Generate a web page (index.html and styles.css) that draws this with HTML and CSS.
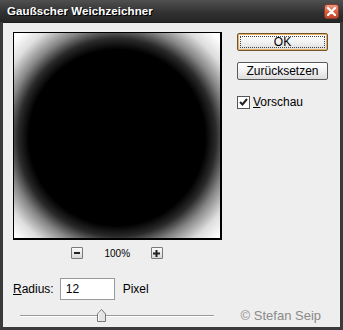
FILE: index.html
```html
<!DOCTYPE html>
<html>
<head>
<meta charset="utf-8">
<link rel="stylesheet" href="styles.css">
</head>
<body>
<div class="window">
  <div class="titlebar">
    <span class="title">Gaußscher Weichzeichner</span>
    <span class="close"><svg width="9" height="9" viewBox="0 0 9 9"><path d="M1 1L8 8M8 1L1 8" stroke="#fff" stroke-width="2.2" stroke-linecap="round"/></svg></span>
  </div>
  <div class="content">
    <div class="top">
      <div class="leftcol">
        <div class="preview"></div>
        <div class="zoomrow">
          <span class="zbtn"><svg width="6" height="2" viewBox="0 0 6 2"><rect width="6" height="2" fill="#222"/></svg></span>
          <span class="zoomval">100%</span>
          <span class="zbtn"><svg width="7" height="7" viewBox="0 0 7 7"><path d="M0 2.5h7v2H0zM2.5 0h2v7h-2z" fill="#222"/></svg></span>
        </div>
      </div>
      <div class="rightcol">
        <button class="btn ok"><span class="focus">OK</span></button>
        <button class="btn">Zurücksetzen</button>
        <label class="check">
          <span class="box"><svg width="9" height="8" viewBox="0 0 9 8"><path d="M1 4l2.5 2.5L8 1" fill="none" stroke="#222" stroke-width="2"/></svg></span>
          <span><u>V</u>orschau</span>
        </label>
      </div>
    </div>
    <div class="radiusrow">
      <span class="lbl"><u>R</u>adius:</span>
      <span class="input">12</span>
      <span class="lbl">Pixel</span>
    </div>
    <div class="sliderrow">
      <div class="slider">
        <div class="track"></div>
        <div class="thumb"><svg width="9" height="13" viewBox="0 0 9 13"><path d="M0.5 12.5V5L4.5 0.5L8.5 5V12.5Z" fill="#e4e4e4" stroke="#777"/><path d="M1.5 11.5V5.4L4.5 1.9" fill="none" stroke="#fff"/></svg></div>
      </div>
      <span class="copy">© Stefan Seip</span>
    </div>
  </div>
</div>
</body>
</html>
```
FILE: styles.css
```css
html, body {
  margin: 0;
  padding: 0;
  background: #2a2a2a;
}
.window {
  width: 343px;
  height: 330px;
  box-sizing: border-box;
  display: flex;
  flex-direction: column;
  background: #3a3a3a;
  padding: 0 3px 3px 3px;
  font-family: "Liberation Sans", Arial, sans-serif;
  font-size: 12px;
  color: #000;
}
.titlebar {
  height: 22px;
  display: flex;
  align-items: center;
  justify-content: space-between;
  background: linear-gradient(#505050, #303030 60%, #262626);
  margin: 0 -3px;
  padding-left: 7px;
  padding-right: 4px;
}
.title {
  color: #fff;
  font-weight: bold;
  font-size: 11.5px;
  letter-spacing: 0.1px;
  text-shadow: 1px 1px 0 #000;
}
.close {
  width: 15px;
  height: 15px;
  box-sizing: border-box;
  border-radius: 3px;
  border: 1px solid #8a3a2a;
  background: linear-gradient(#f09a80, #d65a3a 60%, #c04a2a);
  display: flex;
  align-items: center;
  justify-content: center;
}
.content {
  flex: 1;
  background: #eeeeee;
  border-top: 1px solid #1e1e1e;
  padding: 9px 12px 0 10px;
  display: flex;
  flex-direction: column;
}
.top {
  display: flex;
  gap: 15px;
}
.leftcol {
  display: flex;
  flex-direction: column;
}
.preview {
  width: 206px;
  height: 205px;
  border: 1px solid #000;
  border-right-width: 2px;
  border-bottom-width: 2px;
  background: radial-gradient(circle at 50% 51%, #000 0, #000 88px, #2a2a2a 99px, #858585 111px, #dedede 127px, #fff 142px);
}
.zoomrow {
  margin-top: 7px;
  height: 12px;
  display: flex;
  align-items: center;
  justify-content: center;
  gap: 22px;
  padding-right: 2px;
}
.zbtn {
  width: 12px;
  height: 12px;
  box-sizing: border-box;
  border: 1px solid #7a7a7a;
  border-radius: 1px;
  background: linear-gradient(#fafafa, #d8d8d8);
  display: flex;
  align-items: center;
  justify-content: center;
}
.zoomval {
  font-size: 10px;
  width: 24px;
  text-align: center;
}
.rightcol {
  display: flex;
  flex-direction: column;
  padding-top: 1px;
}
.btn {
  width: 91px;
  height: 18px;
  box-sizing: border-box;
  font-family: "Liberation Sans", Arial, sans-serif;
  font-size: 12px;
  color: #000;
  border: 1px solid #5a5a5a;
  border-radius: 2px;
  background: linear-gradient(#ffffff, #f2f2f2 50%, #dcdcdc);
  padding: 0;
  display: flex;
  align-items: center;
  justify-content: center;
  margin-bottom: 11px;
}
.btn.ok {
  border-color: #6e5530;
  box-shadow: inset 0 0 0 1px #e6b26a;
  padding: 2px;
}
.focus {
  flex: 1;
  align-self: stretch;
  border: 1px dotted #444;
  display: flex;
  align-items: center;
  justify-content: center;
  line-height: 1;
}
.check {
  display: flex;
  align-items: center;
  gap: 3px;
  margin-top: 4px;
}
.box {
  width: 13px;
  height: 13px;
  box-sizing: border-box;
  border: 1px solid #555;
  background: #fff;
  display: flex;
  align-items: center;
  justify-content: center;
}
.radiusrow {
  margin-top: 19px;
  display: flex;
  align-items: center;
  height: 22px;
}
.lbl {
  font-size: 12px;
}
.input {
  width: 55px;
  height: 22px;
  box-sizing: border-box;
  margin-left: 6px;
  margin-right: 8px;
  background: #fff;
  border: 1px solid #9a9a9a;
  padding-left: 5px;
  display: flex;
  align-items: center;
}
.sliderrow {
  margin-top: 8px;
  display: flex;
  align-items: center;
  padding-right: 7px;
}
.slider {
  margin-left: 7px;
  width: 194px;
  height: 13px;
  display: flex;
  align-items: center;
  position: relative;
}
.track {
  width: 100%;
  height: 1px;
  background: #9a9a9a;
  border-bottom: 1px solid #fff;
}
.thumb {
  position: absolute;
  left: 77px;
  top: 0;
  width: 9px;
  height: 13px;
}
.thumb svg {
  display: block;
}
.copy {
  margin-left: auto;
  color: #8a8a8a;
  font-size: 13px;
}
```
